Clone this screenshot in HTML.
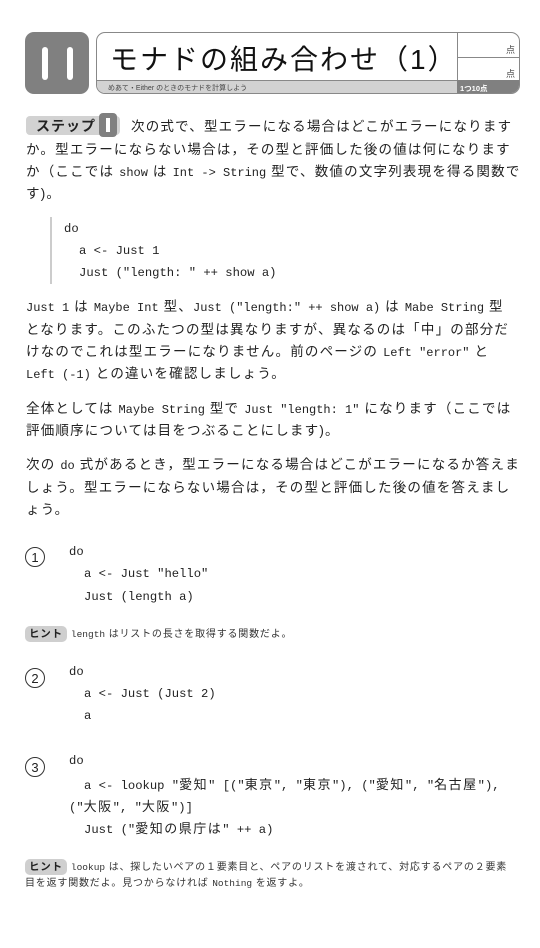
<!DOCTYPE html>
<html><head><meta charset="utf-8"><style>
body{margin:0;width:540px;height:948px;background:#fff;position:relative;overflow:hidden;font-family:"Liberation Sans","Noto Sans CJK JP",sans-serif;color:#222}
.a{position:absolute;white-space:nowrap}
.t{font-size:13.5px;letter-spacing:1.2px;line-height:18px}
.m{font-family:"Liberation Mono","Noto Sans CJK JP",monospace;letter-spacing:0;font-size:12px}
.c{font-family:"Liberation Mono","Noto Sans CJK JP",monospace;font-size:12.2px;line-height:16px;color:#222}
.k{font-size:13px;letter-spacing:1.5px;font-family:"Noto Sans CJK JP",sans-serif}
.circ{position:absolute;width:20px;height:20px;border:1.3px solid #333;border-radius:50%;text-align:center;font-size:13px;line-height:20px;box-sizing:border-box}
.hint{display:inline-block;background:#cfcfcf;border-radius:5px;font-weight:bold;font-size:10.5px;padding:1px 4px;margin-right:4px;color:#222}
.h{font-size:10px;letter-spacing:0.8px;line-height:14px;color:#333}
.h .m{font-size:9.5px}
</style></head><body>
<div class="a" style="left:25px;top:32px;width:64px;height:62px;background:#808080;border-radius:9px"></div>
<div class="a" style="left:42px;top:47px;width:6px;height:33px;background:#fff;border-radius:3px"></div>
<div class="a" style="left:67px;top:47px;width:6px;height:33px;background:#fff;border-radius:3px"></div>
<div class="a" style="left:96px;top:32px;width:424px;height:62px;border:1.5px solid #888;border-radius:9px;box-sizing:border-box;overflow:hidden">
 <div class="a" style="left:0;top:47px;width:360px;height:14px;background:#d2d2d2;border-top:1px solid #888"></div>
 <div class="a" style="left:360px;top:0;width:64px;height:62px;border-left:1px solid #888"></div>
 <div class="a" style="left:360px;top:24px;width:64px;border-top:1px solid #888"></div>
 <div class="a" style="left:360px;top:47px;width:64px;height:14px;background:#808080"></div>
</div>
<div class="a" style="left:110px;top:38px;font-size:28px;letter-spacing:2px;color:#111">モナドの組み合わせ（1）</div>
<div class="a" style="left:108px;top:83px;font-size:7px;color:#444">めあて・Either のときのモナドを計算しよう</div>
<div class="a" style="left:506px;top:43px;font-size:9px;color:#444">点</div>
<div class="a" style="left:506px;top:67px;font-size:9px;color:#444">点</div>
<div class="a" style="left:460px;top:83px;font-size:7.5px;color:#fff;font-weight:bold">1つ10点</div>

<div class="a" style="left:26px;top:116px;width:94px;height:19px;background:#d2d2d2;border-radius:4px"></div>
<div class="a" style="left:36px;top:116px;font-size:14px;font-weight:bold;letter-spacing:1px">ステップ</div>
<div class="a" style="left:99px;top:113px;width:18px;height:24px;background:#808080;border-radius:4px"></div>
<div class="a" style="left:106px;top:118px;width:4px;height:14px;background:#fff"></div>
<div class="a t" style="left:131px;top:118px">次の式で、型エラーになる場合はどこがエラーになります</div>
<div class="a t" style="left:26px;top:141px">か。型エラーにならない場合は，その型と評価した後の値は何になります</div>
<div class="a t" style="left:26px;top:163px">か（ここでは <span class="m">show</span> は <span class="m">Int -&gt; String</span> 型で、数値の文字列表現を得る関数で</div>
<div class="a t" style="left:26px;top:185px">す)。</div>

<div class="a" style="left:50px;top:217px;width:1.5px;height:67px;background:#ccc"></div>
<div class="a c" style="left:64px;top:221px">do</div>
<div class="a c" style="left:79px;top:243px">a &lt;- Just 1</div>
<div class="a c" style="left:79px;top:265px">Just ("length: " ++ show a)</div>

<div class="a t" style="left:26px;top:298px"><span class="m">Just 1</span> は <span class="m">Maybe Int</span> 型、<span class="m">Just ("length:" ++ show a)</span> は <span class="m">Mabe String</span> 型</div>
<div class="a t" style="left:26px;top:321px">となります。このふたつの型は異なりますが、異なるのは「中」の部分だ</div>
<div class="a t" style="left:26px;top:343px">けなのでこれは型エラーになりません。前のページの <span class="m">Left "error"</span> と</div>
<div class="a t" style="left:26px;top:365px"><span class="m">Left (-1)</span> との違いを確認しましょう。</div>
<div class="a t" style="left:26px;top:400px">全体としては <span class="m">Maybe String</span> 型で <span class="m">Just "length: 1"</span> になります（ここでは</div>
<div class="a t" style="left:26px;top:422px">評価順序については目をつぶることにします)。</div>
<div class="a t" style="left:26px;top:456px">次の <span class="m">do</span> 式があるとき，型エラーになる場合はどこがエラーになるか答えま</div>
<div class="a t" style="left:26px;top:479px">しょう。型エラーにならない場合は，その型と評価した後の値を答えまし</div>
<div class="a t" style="left:26px;top:501px">ょう。</div>

<div class="circ" style="left:25px;top:547px">1</div>
<div class="a c" style="left:69px;top:544px">do</div>
<div class="a c" style="left:84px;top:566px">a &lt;- Just "hello"</div>
<div class="a c" style="left:84px;top:589px">Just (length a)</div>
<div class="a h" style="left:25px;top:626px"><span class="hint">ヒント</span><span class="m">length</span> はリストの長さを取得する関数だよ。</div>

<div class="circ" style="left:25px;top:668px">2</div>
<div class="a c" style="left:69px;top:664px">do</div>
<div class="a c" style="left:84px;top:686px">a &lt;- Just (Just 2)</div>
<div class="a c" style="left:84px;top:708px">a</div>

<div class="circ" style="left:25px;top:757px">3</div>
<div class="a c" style="left:69px;top:753px">do</div>
<div class="a c" style="left:84px;top:776px">a &lt;- lookup "<span class="k">愛知</span>" [("<span class="k">東京</span>", "<span class="k">東京</span>"), ("<span class="k">愛知</span>", "<span class="k">名古屋</span>"),</div>
<div class="a c" style="left:69px;top:798px">("<span class="k">大阪</span>", "<span class="k">大阪</span>")]</div>
<div class="a c" style="left:84px;top:820px">Just ("<span class="k">愛知の県庁は</span>" ++ a)</div>
<div class="a h" style="left:25px;top:859px"><span class="hint">ヒント</span><span class="m">lookup</span> は、探したいペアの１要素目と、ペアのリストを渡されて、対応するペアの２要素</div>
<div class="a h" style="left:25px;top:877px">目を返す関数だよ。見つからなければ <span class="m">Nothing</span> を返すよ。</div>
</body></html>
